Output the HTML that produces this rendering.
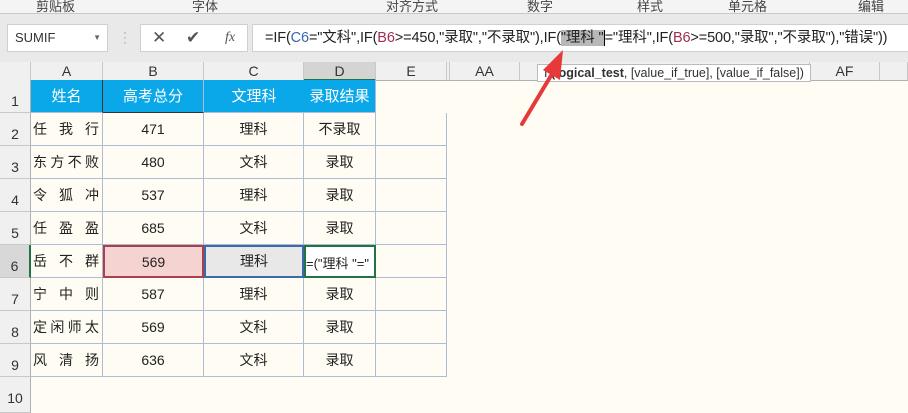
<!DOCTYPE html><html><head><meta charset="utf-8"><style>
*{margin:0;padding:0;box-sizing:border-box}
body{width:908px;height:413px;overflow:hidden;background:#fffcf3;font-family:"Liberation Sans","Noto Sans CJK SC",sans-serif;position:relative}
.a{position:absolute}
.rib{left:0;top:0;width:908px;height:14px;background:#f4f4f4;border-bottom:1px solid #c8c8c8;font-size:13px;color:#444;overflow:hidden}
.rib span{position:absolute;top:-4px}
.fb{left:0;top:14px;width:908px;height:48px;background:#e9e9e9}
.box{background:#fff;border:1px solid #d0d0d0}
.ch{top:62px;height:19px;background:#f0f0f0;border-right:1px solid #c8c8c8;border-bottom:1px solid #b0b0b0;font-size:14px;color:#333;text-align:center;line-height:19px}
.rh{left:0;width:31px;background:#f0f0f0;border-bottom:1px solid #c8c8c8;border-right:1px solid #b0b0b0;font-size:14px;color:#333;text-align:center;padding-top:13px}
.c{height:33px;border-right:1px solid #aebbd5;border-bottom:1px solid #aebbd5;font-size:14px;color:#222;text-align:center;line-height:33px}
.n{display:flex;justify-content:space-between;padding:0 3px 0 2px;white-space:nowrap}
.h{background:#0aa8e8;color:#fff;font-size:15px}
</style></head><body>
<div class="a rib"><span style="left:36px">剪贴板</span><span style="left:192px">字体</span><span style="left:386px">对齐方式</span><span style="left:527px">数字</span><span style="left:637px">样式</span><span style="left:728px">单元格</span><span style="left:858px">编辑</span></div>
<div class="a fb"></div>
<div class="a box" style="left:7px;top:24px;width:101px;height:28px;font-size:13px;color:#333;line-height:26px;padding-left:7px">SUMIF<span style="position:absolute;right:6px;top:0;font-size:8px;color:#666">▼</span></div>
<div class="a" style="left:123px;top:30px;color:#999;font-size:12px;line-height:5px">·<br>·<br>·</div>
<div class="a box" style="left:140px;top:24px;width:108px;height:28px;color:#555;font-size:17px;line-height:26px"><span style="position:absolute;left:11px">✕</span><span style="position:absolute;left:45px">✔</span><span style="position:absolute;left:84px;font-family:'Liberation Serif',serif;font-style:italic;font-size:14px">fx</span></div>
<div class="a box" style="left:252px;top:24px;width:660px;height:28px;font-size:14.5px;letter-spacing:-0.13px;line-height:26px;padding-left:12px;color:#222;white-space:nowrap">=IF(<span style="color:#3a66b0">C6</span>="文科",IF(<span style="color:#a03050">B6</span>&gt;=450,"录取","不录取"),IF(<span style="background:#b8b8b8">"理科 "</span><span style="border-left:1px solid #000">="理科",IF(</span><span style="color:#a03050">B6</span>&gt;=500,"录取","不录取"),"错误"))</div>
<div class="a ch" style="left:0;width:31px;background:#f0f0f0"></div>
<div class="a ch" style="left:31px;width:72px">A</div>
<div class="a ch" style="left:103px;width:101px">B</div>
<div class="a ch" style="left:204px;width:100px">C</div>
<div class="a ch" style="left:304px;width:72px;background:#d4d4d4;border-bottom:2px solid #217346">D</div>
<div class="a ch" style="left:376px;width:71px">E</div>
<div class="a ch" style="left:447px;width:3px"></div>
<div class="a ch" style="left:450px;width:70px">AA</div>
<div class="a ch" style="left:520px;width:290px"></div>
<div class="a ch" style="left:810px;width:70px">AF</div>
<div class="a ch" style="left:880px;width:28px"></div>
<div class="a" style="left:537px;top:64px;width:274px;height:18px;background:#fff;border:1px solid #bbb;font-size:12.5px;line-height:16px;padding-left:6px;color:#333;white-space:nowrap">I <b>(logical_test</b>, [value_if_true], [value_if_false])</div>
<div class="a rh" style="top:80px;height:33px">1</div>
<div class="a rh" style="top:113px;height:33px">2</div>
<div class="a rh" style="top:146px;height:33px">3</div>
<div class="a rh" style="top:179px;height:33px">4</div>
<div class="a rh" style="top:212px;height:33px">5</div>
<div class="a rh" style="top:245px;height:33px;background:#d8d8d8;border-right:2px solid #217346">6</div>
<div class="a rh" style="top:278px;height:33px">7</div>
<div class="a rh" style="top:311px;height:33px">8</div>
<div class="a rh" style="top:344px;height:33px">9</div>
<div class="a rh" style="top:377px;height:36px">10</div>
<div class="a" style="left:31px;top:80px">
<div style="display:flex"><div class="c h" style="width:72px;border-right:1px solid #333">姓名</div><div class="c h" style="width:101px;border-bottom:1px solid #333">高考总分</div><div class="c h" style="width:100px;border-right:0">文理科</div><div class="c h" style="width:72px">录取结果</div></div>
<div style="display:flex"><div class="c n" style="width:72px"><span>任</span><span>我</span><span>行</span></div><div class="c" style="width:101px">471</div><div class="c" style="width:100px">理科</div><div class="c" style="width:72px">不录取</div><div class="c" style="width:71px"></div></div>
<div style="display:flex"><div class="c n" style="width:72px"><span>东</span><span>方</span><span>不</span><span>败</span></div><div class="c" style="width:101px">480</div><div class="c" style="width:100px">文科</div><div class="c" style="width:72px">录取</div><div class="c" style="width:71px"></div></div>
<div style="display:flex"><div class="c n" style="width:72px"><span>令</span><span>狐</span><span>冲</span></div><div class="c" style="width:101px">537</div><div class="c" style="width:100px">理科</div><div class="c" style="width:72px">录取</div><div class="c" style="width:71px"></div></div>
<div style="display:flex"><div class="c n" style="width:72px"><span>任</span><span>盈</span><span>盈</span></div><div class="c" style="width:101px">685</div><div class="c" style="width:100px">文科</div><div class="c" style="width:72px">录取</div><div class="c" style="width:71px"></div></div>
<div style="display:flex"><div class="c n" style="width:72px"><span>岳</span><span>不</span><span>群</span></div><div class="c" style="width:101px;background:#f5d3d0;border:2px solid #a84050;line-height:31px">569</div><div class="c" style="width:100px;background:#e8e8e8;border:2px solid #3b6aa8;line-height:29px">理科</div><div class="c" style="width:72px;border:2px solid #217346;background:#fff;text-align:left;font-size:13px;overflow:hidden;white-space:nowrap;line-height:33px">=("理科 "="</div><div class="c" style="width:71px"></div></div>
<div style="display:flex"><div class="c n" style="width:72px"><span>宁</span><span>中</span><span>则</span></div><div class="c" style="width:101px">587</div><div class="c" style="width:100px">理科</div><div class="c" style="width:72px">录取</div><div class="c" style="width:71px"></div></div>
<div style="display:flex"><div class="c n" style="width:72px"><span>定</span><span>闲</span><span>师</span><span>太</span></div><div class="c" style="width:101px">569</div><div class="c" style="width:100px">文科</div><div class="c" style="width:72px">录取</div><div class="c" style="width:71px"></div></div>
<div style="display:flex"><div class="c n" style="width:72px"><span>风</span><span>清</span><span>扬</span></div><div class="c" style="width:101px">636</div><div class="c" style="width:100px">文科</div><div class="c" style="width:72px">录取</div><div class="c" style="width:71px"></div></div>
</div>
<svg class="a" style="left:0;top:0" width="908" height="413"><path d="M522 124 L552 74" stroke="#e8393a" stroke-width="4" stroke-linecap="round"/><path d="M563 50 L543 70 L560 80 Z" fill="#e8393a"/></svg>
</body></html>
